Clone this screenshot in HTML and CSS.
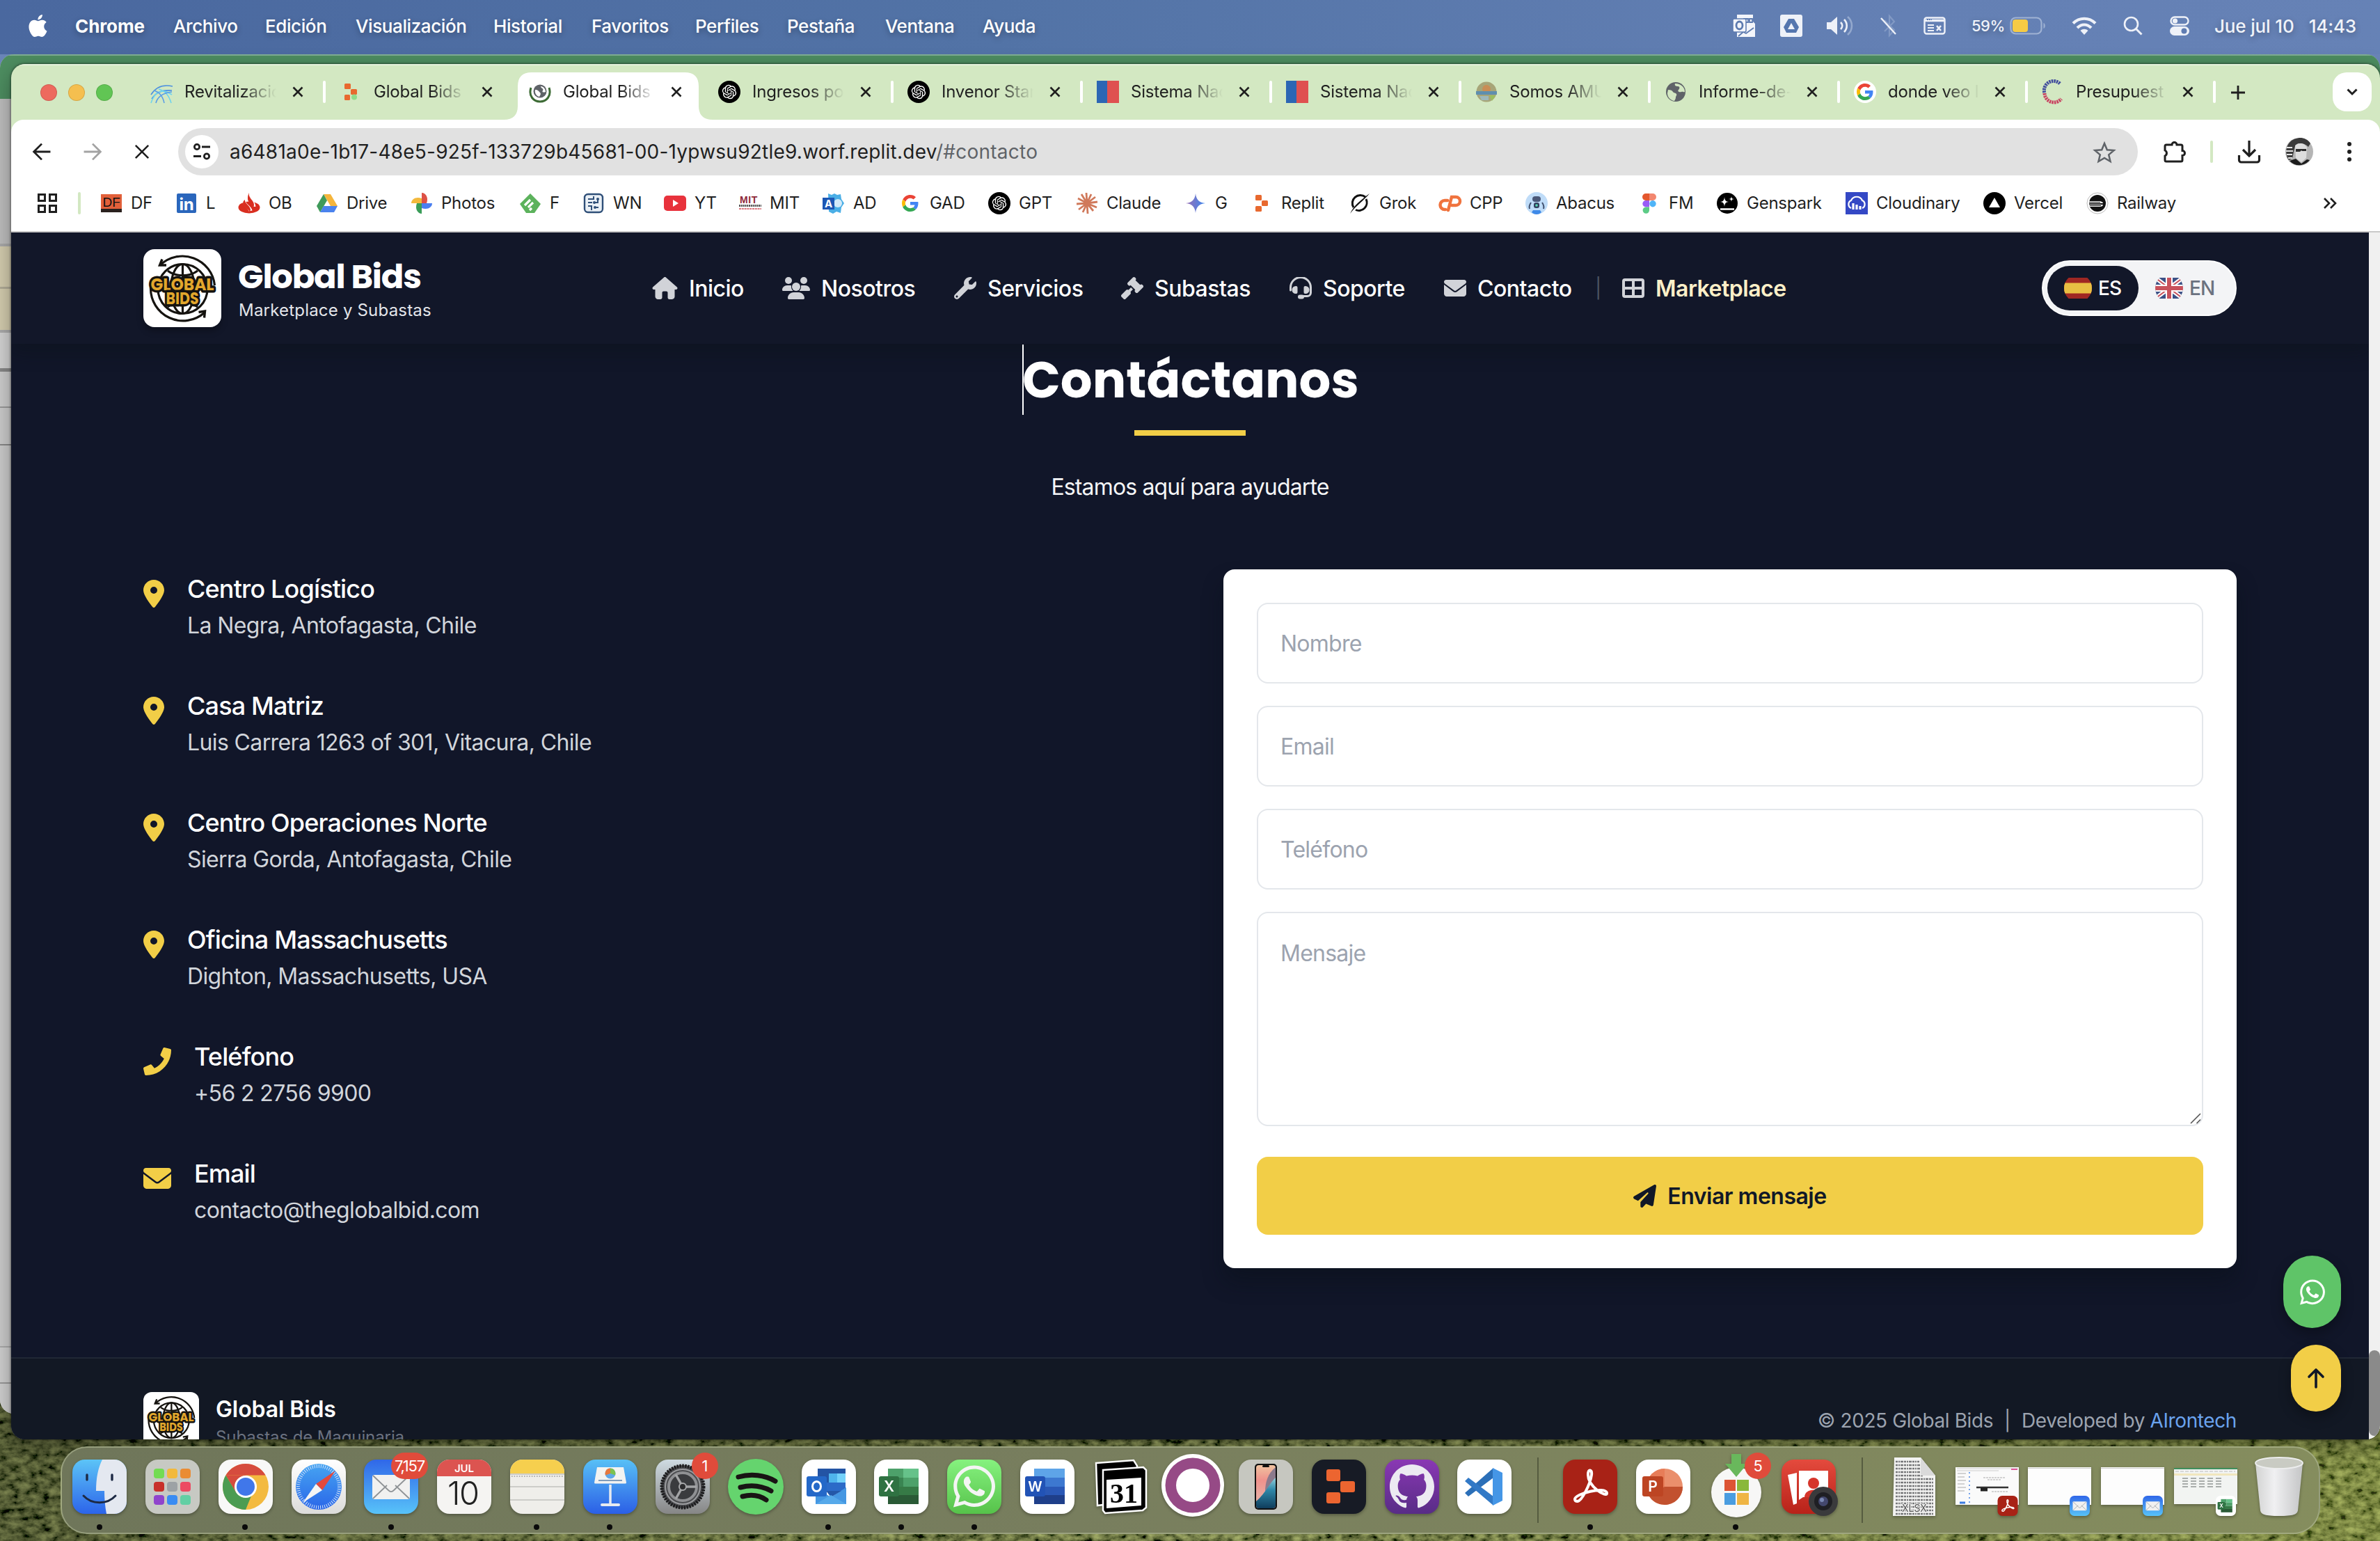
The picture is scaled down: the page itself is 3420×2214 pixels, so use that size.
FILE: index.html
```html
<!DOCTYPE html>
<html lang="es">
<head>
<meta charset="utf-8">
<title>Global Bids - Contacto</title>
<link rel="stylesheet" href="styles.css">
</head>
<body>
<svg class="defs" width="0" height="0">
  <defs>
    <linearGradient id="g-finder" x1="0" y1="0" x2="0" y2="1"><stop offset="0" stop-color="#5cc4f7"/><stop offset="1" stop-color="#2c64ea"/></linearGradient>
    <linearGradient id="g-light" x1="0" y1="0" x2="0" y2="1"><stop offset="0" stop-color="#ffffff"/><stop offset="1" stop-color="#dcdcda"/></linearGradient>
    <linearGradient id="g-mail" x1="0" y1="0" x2="0" y2="1"><stop offset="0" stop-color="#3067e8"/><stop offset="1" stop-color="#58c3f9"/></linearGradient>
    <linearGradient id="g-key" x1="0" y1="0" x2="0" y2="1"><stop offset="0" stop-color="#58c0f6"/><stop offset="1" stop-color="#2b5fe6"/></linearGradient>
    <linearGradient id="g-wa" x1="0" y1="0" x2="0" y2="1"><stop offset="0" stop-color="#86f27f"/><stop offset="1" stop-color="#56c24a"/></linearGradient>
    <linearGradient id="g-gh" x1="0" y1="0" x2="0" y2="1"><stop offset="0" stop-color="#8a38b4"/><stop offset="1" stop-color="#582c86"/></linearGradient>
    <linearGradient id="g-set" x1="0" y1="0" x2="0" y2="1"><stop offset="0" stop-color="#cfdbe2"/><stop offset="1" stop-color="#868686"/></linearGradient>
    <linearGradient id="g-saf" x1="0" y1="0" x2="0" y2="1"><stop offset="0" stop-color="#46a4f2"/><stop offset="1" stop-color="#2a66e8"/></linearGradient>
    <linearGradient id="g-phone" x1="0" y1="0" x2="0" y2="1"><stop offset="0" stop-color="#f0c3a0"/><stop offset=".35" stop-color="#ef928c"/><stop offset=".7" stop-color="#e9a9a0"/><stop offset="1" stop-color="#e9a9a0"/></linearGradient>
    <linearGradient id="g-phone2" x1="0" y1="0" x2="0" y2="1"><stop offset="0" stop-color="#8fd0dc"/><stop offset=".4" stop-color="#2f87a8"/><stop offset="1" stop-color="#0f3d5c"/></linearGradient>
    <linearGradient id="g-trash" x1="0" y1="0" x2="1" y2="0"><stop offset="0" stop-color="#d2d3d2"/><stop offset=".4" stop-color="#f0f0f2"/><stop offset="1" stop-color="#c4c5c6"/></linearGradient>
    <linearGradient id="g-red" x1="0" y1="0" x2="0" y2="1"><stop offset="0" stop-color="#e44a3d"/><stop offset="1" stop-color="#b82219"/></linearGradient>
    <linearGradient id="g-gem" x1="0" y1="0" x2="1" y2="0"><stop offset="0" stop-color="#9a6fb4"/><stop offset="1" stop-color="#3b86ee"/></linearGradient>
    <linearGradient id="g-sun" x1="0" y1="0" x2="1" y2="0"><stop offset="0" stop-color="#0c1006" stop-opacity=".35"/><stop offset=".5" stop-color="#30380e" stop-opacity=".1"/><stop offset="1" stop-color="#8a9a30" stop-opacity=".3"/></linearGradient>

    <symbol id="i-x" viewBox="0 0 16 16"><path d="M1.500 1.500l13 13M14.500 1.500l-13 13" stroke="currentColor" stroke-width="2.600" fill="none"/></symbol>
    <symbol id="i-mail" viewBox="0 0 512 512"><path fill="currentColor" d="M48 64C21.500 64 0 85.500 0 112c0 15.100 7.100 29.300 19.200 38.400L236.800 313.600c11.400 8.500 27 8.500 38.400 0L492.800 150.400c12.100-9.100 19.200-23.300 19.200-38.400c0-26.500-21.500-48-48-48H48zM0 176V384c0 35.300 28.700 64 64 64H448c35.300 0 64-28.700 64-64V176L294.400 339.200c-22.800 17.100-54 17.100-76.800 0L0 176z"/></symbol>
    <symbol id="i-pin" viewBox="0 0 384 512"><path fill="currentColor" d="M215.700 499.200C267 435 384 279.400 384 192C384 86 298 0 192 0S0 86 0 192c0 87.400 117 243 168.300 307.200c12.300 15.300 35.100 15.300 47.400 0zM192 128a64 64 0 1 1 0 128 64 64 0 1 1 0-128z"/></symbol>
    <symbol id="i-phone" viewBox="0 0 512 512"><path fill="currentColor" d="M493.400 24.600l-104-24c-11.300-2.600-22.900 3.300-27.500 13.900l-48 112c-4.200 9.800-1.400 21.300 6.900 28l60.600 49.600c-36 76.700-98.900 140.500-177.200 177.200l-49.600-60.600c-6.800-8.300-18.200-11.100-28-6.900l-112 48C3.900 366.500-2 378.100.6 389.400l24 104C27.100 504.200 36.700 512 48 512c256.100 0 464-207.500 464-464 0-11.200-7.700-20.900-18.600-23.400z"/></symbol>
    <symbol id="i-plane" viewBox="0 0 512 512"><path fill="currentColor" d="M498.100 5.600c10.100 7 15.400 19.100 13.500 31.200l-64 416c-1.500 9.700-7.400 18.200-16 23s-18.900 5.400-28 1.600L284 427.700l-68.500 74.100c-8.900 9.700-22.900 12.900-35.200 8.100S160 493.200 160 480V396.400c0-4 1.500-7.800 4.200-10.700L331.800 202.800c5.800-6.300 5.600-16-.4-22s-15.700-6.400-22-.7L106 360.800 17.700 316.600C7.100 311.300 .3 300.700 0 288.900s5.900-22.800 16.100-28.700l448-256c10.700-6.100 23.900-5.500 34 1.400z"/></symbol>
    <symbol id="i-wa" viewBox="0 0 448 512"><path fill="currentColor" d="M380.900 97.100C339 55.100 283.200 32 223.900 32c-122.400 0-222 99.600-222 222 0 39.100 10.200 77.300 29.600 111L0 480l117.700-30.900c32.400 17.700 68.900 27 106.100 27h.1c122.300 0 224.100-99.600 224.100-222 0-59.300-25.200-115-67.100-157zm-157 341.600c-33.200 0-65.700-8.900-94-25.700l-6.700-4-69.800 18.300L72 359.200l-4.400-7c-18.500-29.400-28.200-63.300-28.200-98.200 0-101.700 82.800-184.500 184.600-184.500 49.300 0 95.600 19.200 130.400 54.100 34.800 34.900 56.200 81.200 56.100 130.500 0 101.800-84.900 184.600-186.600 184.600zm101.200-138.200c-5.500-2.800-32.800-16.200-37.900-18-5.100-1.900-8.800-2.800-12.500 2.800-3.700 5.600-14.300 18-17.600 21.800-3.200 3.700-6.500 4.200-12 1.400-32.600-16.300-54-29.100-75.500-66-5.700-9.800 5.700-9.100 16.300-30.300 1.800-3.700.9-6.900-.5-9.700-1.400-2.800-12.500-30.100-17.100-41.200-4.500-10.800-9.100-9.300-12.500-9.500-3.200-.2-6.900-.2-10.600-.2-3.700 0-9.700 1.400-14.800 6.900-5.100 5.600-19.400 19-19.400 46.300 0 27.300 19.900 53.700 22.600 57.400 2.800 3.700 39.100 59.700 94.800 83.800 35.200 15.200 49 16.500 66.600 13.900 10.700-1.600 32.800-13.400 37.400-26.400 4.600-13 4.600-24.100 3.200-26.400-1.300-2.500-5-3.900-10.500-6.600z"/></symbol>
    <symbol id="i-wrench" viewBox="0 0 512 512"><path fill="currentColor" d="M507.730 109.100c-2.240-9.030-13.540-12.090-20.120-5.510l-74.360 74.360-67.880-11.310-11.310-67.880 74.360-74.360c6.620-6.620 3.430-17.900-5.660-20.160-47.380-11.740-99.550.91-136.580 37.930-39.640 39.640-50.550 97.100-34.050 147.200L18.740 402.760c-24.990 24.990-24.990 65.510 0 90.500 24.990 24.990 65.510 24.990 90.500 0l213.210-213.210c50.120 16.710 107.470 5.680 147.370-34.220 37.070-37.070 49.700-89.320 37.910-136.730zM64 472c-13.250 0-24-10.750-24-24 0-13.260 10.750-24 24-24s24 10.740 24 24c0 13.250-10.750 24-24 24z"/></symbol>
    <symbol id="i-home" viewBox="0 0 576 512"><path fill="currentColor" d="M575.800 255.500c0 18-15 32.100-32 32.100h-32l.7 160.200c.2 35.500-28.500 64.300-64 64.300H392c-22 0-40-18-40-40V360c0-17.700-14.300-32-32-32h-64c-17.700 0-32 14.300-32 32v112c0 22-18 40-40 40h-56c-35.300 0-64-28.700-64-64V287.600H32c-18 0-32-14-32-32.100 0-9 3-17 10-24L266.400 8c7-7 15-8 22-8s15 2 21 7L564.800 231.500c8 7 12 15 11 24z"/></symbol>
    <symbol id="i-users" viewBox="0 0 40 32"><g fill="currentColor"><circle cx="9" cy="5" r="5"/><circle cx="31" cy="5" r="5"/><circle cx="20" cy="14" r="6"/><path d="M0 18.500C0 15 3 12 7 12h4.500c1 0 1.500.3 1.500.3-.4 3 .5 5.600 2.500 7.700H1.300C.6 20 0 19.300 0 18.500zM40 18.500c0-3.500-3-6.500-7-6.500h-4.500c-1 0-1.500.3-1.500.3.4 3-.5 5.600-2.500 7.700h14.200c.7 0 1.300-.7 1.300-1.500zM8 30.300C8 25.700 11.700 22 16.300 22h7.400c4.600 0 8.300 3.700 8.300 8.300 0 .9-.7 1.700-1.700 1.700H9.700C8.700 32 8 31.200 8 30.300z"/></g></symbol>
    <symbol id="i-gavel" viewBox="0 0 512 512"><path fill="currentColor" d="M318.600 9.400c-12.500-12.500-32.800-12.500-45.300 0l-120 120c-12.500 12.500-12.500 32.800 0 45.300l16 16c12.500 12.500 32.800 12.500 45.300 0l4-4L325.400 293.400l-4 4c-12.500 12.500-12.500 32.800 0 45.300l16 16c12.500 12.500 32.800 12.500 45.300 0l120-120c12.500-12.500 12.500-32.800 0-45.300l-16-16c-12.500-12.500-32.800-12.500-45.300 0l-4 4L330.600 74.600l4-4c12.500-12.500 12.500-32.800 0-45.300l-16-16zm-152 288c-12.500-12.500-32.800-12.500-45.300 0l-112 112c-12.500 12.500-12.500 32.800 0 45.300l48 48c12.500 12.500 32.800 12.500 45.300 0l112-112c12.500-12.500 12.500-32.800 0-45.300l-1.400-1.400L272 285.300 226.700 240 168 298.700l-1.400-1.400z"/></symbol>
    <symbol id="i-headset" viewBox="0 0 32 32"><path d="M1.500 19v-4a14.500 14.500 0 0 1 29 0v7.500c0 3-2.400 5-5 5H18" fill="none" stroke="currentColor" stroke-width="3" stroke-linecap="round"/><g fill="currentColor"><path d="M9 13h.500a2 2 0 0 1 2 2v7a2 2 0 0 1-2 2H9a5.500 5.500 0 0 1 0-11zM23 13h-.500a2 2 0 0 0-2 2v7a2 2 0 0 0 2 2h.500a5.500 5.500 0 0 0 0-11z"/><rect x="12" y="25.500" width="9" height="6" rx="3"/></g></symbol>
    <symbol id="i-table" viewBox="0 0 32 32"><path fill="currentColor" fill-rule="evenodd" d="M4 2h24a4 4 0 0 1 4 4v20a4 4 0 0 1-4 4H4a4 4 0 0 1-4-4V6a4 4 0 0 1 4-4zm0 4v8h10V6zm14 0v8h10V6zM4 18v8h10v-8zm14 0v8h10v-8z"/></symbol>
    <symbol id="i-openai" viewBox="0 0 32 32"><circle cx="16" cy="16" r="16" fill="#000"/><path transform="translate(5.800 5.800) scale(.85)" fill="#fff" d="M22.2819 9.8211a5.9847 5.9847 0 0 0-.5157-4.9108 6.0462 6.0462 0 0 0-6.5098-2.9A6.0651 6.0651 0 0 0 4.9807 4.1818a5.9847 5.9847 0 0 0-3.9977 2.9 6.0462 6.0462 0 0 0 .7427 7.0966 5.98 5.98 0 0 0 .511 4.9107 6.051 6.051 0 0 0 6.5146 2.9001A5.9847 5.9847 0 0 0 13.2599 24a6.0557 6.0557 0 0 0 5.7718-4.2058 5.9894 5.9894 0 0 0 3.9977-2.9001 6.0557 6.0557 0 0 0-.7475-7.0729zm-9.022 12.6081a4.4755 4.4755 0 0 1-2.8764-1.0408l.1419-.0804 4.7783-2.7582a.7948.7948 0 0 0 .3927-.6813v-6.7369l2.02 1.1686a.071.071 0 0 1 .038.052v5.5826a4.504 4.504 0 0 1-4.4945 4.4944zm-9.6607-4.1254a4.4708 4.4708 0 0 1-.5346-3.0137l.142.0852 4.783 2.7582a.7712.7712 0 0 0 .7806 0l5.8428-3.3685v2.3324a.0804.0804 0 0 1-.0332.0615L9.74 19.9502a4.4992 4.4992 0 0 1-6.1408-1.6464zM2.3408 7.8956a4.485 4.485 0 0 1 2.3655-1.9728V11.6a.7664.7664 0 0 0 .3879.6765l5.8144 3.3543-2.0201 1.1685a.0757.0757 0 0 1-.071 0l-4.8303-2.7865A4.504 4.504 0 0 1 2.3408 7.872zm16.5963 3.8558L13.1038 8.364 15.1192 7.2a.0757.0757 0 0 1 .071 0l4.8303 2.7913a4.4944 4.4944 0 0 1-.6765 8.1042v-5.6772a.79.79 0 0 0-.407-.667zm2.0107-3.0231l-.142-.0852-4.7735-2.7818a.7759.7759 0 0 0-.7854 0L9.409 9.2297V6.8974a.0662.0662 0 0 1 .0284-.0615l4.8303-2.7866a4.4992 4.4992 0 0 1 6.6802 4.66zM8.3065 12.863l-2.02-1.1638a.0804.0804 0 0 1-.038-.0567V6.0742a4.4992 4.4992 0 0 1 7.3757-3.4537l-.142.0805L8.704 5.459a.7948.7948 0 0 0-.3927.6813zm1.0976-2.3654l2.602-1.4998 2.6069 1.4998v2.9994l-2.5974 1.4997-2.6067-1.4997Z"/></symbol>
    <symbol id="i-flagcl" viewBox="0 0 32 32"><rect width="15" height="32" fill="#2c66b4"/><rect x="15" width="17" height="32" fill="#df5150"/></symbol>
    <symbol id="i-globe" viewBox="0 0 32 32"><circle cx="16" cy="16" r="14" fill="#5f6368"/><path d="M5 13c4 0 6 1 7 3s4 1 5 3-1 3-1 5-1 3-2 5C8 28 4 23 4 18zM15 4c-1 3 1 4 4 4s3 3 1 5 1 4 4 3 3 1 5 0c0-6-5-12-14-12z" fill="#d3e8c2"/></symbol>
    <symbol id="i-google" viewBox="0 0 48 48"><path fill="#EA4335" d="M24 9.500c3.540 0 6.710 1.220 9.210 3.600l6.850-6.850C35.900 2.380 30.470 0 24 0 14.620 0 6.510 5.380 2.560 13.220l7.980 6.190C12.430 13.720 17.740 9.500 24 9.500z"/><path fill="#4285F4" d="M46.980 24.550c0-1.570-.15-3.090-.38-4.550H24v9.020h12.940c-.58 2.960-2.260 5.480-4.780 7.180l7.730 6c4.510-4.180 7.090-10.360 7.090-17.650z"/><path fill="#FBBC05" d="M10.530 28.590c-.48-1.450-.76-2.990-.76-4.590s.27-3.140.76-4.590l-7.980-6.190C.92 16.460 0 20.120 0 24c0 3.880.92 7.540 2.560 10.780l7.970-6.190z"/><path fill="#34A853" d="M24 48c6.480 0 11.930-2.130 15.890-5.810l-7.730-6c-2.150 1.450-4.920 2.300-8.160 2.300-6.260 0-11.570-4.220-13.470-9.910l-7.980 6.190C6.510 42.620 14.620 48 24 48z"/></symbol>
    <symbol id="i-replit" viewBox="0 0 32 32"><g fill="#e8692f"><rect x="7" y="4" width="9" height="8" rx="1.500"/><rect x="16" y="12" width="9" height="8" rx="1.500"/><rect x="7" y="20" width="9" height="8" rx="1.500"/></g></symbol>
    <symbol id="i-logo" viewBox="0 0 112 112">
      <g fill="none" stroke="#15130f" stroke-width="3.200">
        <circle cx="56.500" cy="57" r="35.500"/><ellipse cx="56.500" cy="57" rx="17" ry="35.500"/><path d="M56.500 21v72M35 31c12 9 31 9 43 0M35 83c12-9 31-9 43 0"/>
        <path d="M24 23A46.500 46.500 0 0 1 102.500 52M88 91A46.500 46.500 0 0 1 10.500 55"/><path d="M27 14.500l-3.500 8.500 9.500 0M79.500 90.500l9-1.500-1 9.500" stroke-width="3.400"/>
      </g>
      <g font-family="Poppins, Inter, sans-serif" font-weight="700" fill="#e2a72c" stroke="#15130f" stroke-width="7" stroke-linejoin="round" paint-order="stroke" text-anchor="middle">
        <text x="56" y="58.500" font-size="25" textLength="91" lengthAdjust="spacingAndGlyphs">GLOBAL</text>
        <text x="56" y="79" font-size="25" textLength="47" lengthAdjust="spacingAndGlyphs">BIDS</text>
      </g>
    </symbol>
    <symbol id="i-mailapp" viewBox="0 0 78 78"><rect width="78" height="78" rx="18" fill="url(#g-mail)"/><rect x="12" y="22" width="54" height="35" rx="3" fill="#f1f1f0"/><path d="M13 56l20-19M65 56L45 37M13 23l22 21c3 3 5 3 8 0l22-21" fill="none" stroke="#8f9396" stroke-width="1.800"/></symbol>
    <symbol id="i-acro" viewBox="0 0 78 78"><rect width="78" height="78" rx="18" fill="#a82216"/><path d="M17 57c0-8 44-19 46-9 1 8-28-9-27-27 0-8 6-7 5 1-2 14-14 37-20 38-3 0-4-1-4-3z" fill="none" stroke="#fff" stroke-width="4"/></symbol>
    <symbol id="i-excel" viewBox="0 0 78 78"><rect width="78" height="78" rx="18" fill="#fff"/><rect x="20" y="13" width="22" height="13" fill="#4da16a"/><rect x="42" y="13" width="22" height="13" fill="#66c28a"/><rect x="20" y="26" width="22" height="13" fill="#3a8552"/><rect x="42" y="26" width="22" height="13" fill="#4da16a"/><rect x="20" y="39" width="44" height="12" fill="#367a46"/><rect x="20" y="51" width="44" height="13" fill="#2a5a36"/><rect x="7" y="24" width="29" height="29" rx="3" fill="#2f7242"/><text x="21.500" y="46" font-family="Inter" font-size="21" font-weight="600" fill="#fff" text-anchor="middle">X</text></symbol>
    <filter id="grass" x="0" y="0" width="100%" height="100%"><feTurbulence type="fractalNoise" baseFrequency=".07 .11" numOctaves="4" seed="8"/><feColorMatrix values=".75 0 0 0 -.19  .82 0 0 0 -.19  .3 0 0 0 -.08  0 0 0 0 1"/></filter>
  </defs>
</svg>

<div class="desktop">
  <svg class="grass" width="3420" height="220"><rect width="3420" height="220" filter="url(#grass)"/><rect width="3420" height="220" fill="url(#g-sun)"/></svg>

  <header class="menubar">
    <nav class="menus">
      <svg width="27" height="32" viewBox="2 0 20 24" fill="#fff"><path d="M12.152 6.896c-.948 0-2.415-1.078-3.960-1.040-2.040.027-3.910 1.183-4.961 3.014-2.117 3.675-.546 9.103 1.519 12.090 1.013 1.454 2.208 3.090 3.792 3.039 1.520-.065 2.090-.987 3.935-.987 1.831 0 2.350.987 3.960.948 1.637-.026 2.676-1.480 3.676-2.948 1.156-1.688 1.636-3.325 1.662-3.415-.039-.013-3.182-1.221-3.220-4.857-.026-3.040 2.480-4.494 2.597-4.559-1.429-2.090-3.623-2.324-4.390-2.376-2-.156-3.675 1.090-4.610 1.090zM15.530 3.830c.843-1.012 1.400-2.427 1.245-3.830-1.207.052-2.662.805-3.532 1.818-.780.896-1.454 2.338-1.273 3.714 1.338.104 2.715-.688 3.559-1.701"/></svg>
      <b>Chrome</b><span>Archivo</span><span>Edición</span><span>Visualización</span><span>Historial</span><span>Favoritos</span><span>Perfiles</span><span>Pestaña</span><span>Ventana</span><span>Ayuda</span>
    </nav>
    <div class="status">
      <svg width="34" height="34" viewBox="0 0 34 34"><path d="M7 1h23v10l3 3v19H7z" fill="#f3f5fa"/><path d="M17 7h6v5h-6zM25 7h4v5h-4zM9 22l11 6 11-8M9 32l8-7" stroke="#5d7bb0" stroke-width="1.800" fill="none"/><rect x="1" y="7" width="19" height="19" rx="2" fill="#f3f5fa" stroke="#5d7bb0" stroke-width="1.500"/><ellipse cx="10.500" cy="16.500" rx="4.500" ry="5.500" fill="none" stroke="#5d7bb0" stroke-width="2.800"/></svg>
      <svg width="32" height="32" viewBox="0 0 32 32"><rect width="32" height="32" rx="3" fill="#eef1f8"/><path d="M12 6h8l7 12-4 8H9l-4-8z" fill="#5576ae"/><path d="M16 12l5 9H11z" fill="#eef1f8"/></svg>
      <svg width="40" height="32" viewBox="0 0 40 32"><path d="M1 11h6l9-8v26l-9-8H1z" fill="#eef1f8"/><path d="M21 11c3 3 3 7 0 10M26 7c5 5 5 13 0 18" stroke="#eef1f8" stroke-width="2.600" fill="none"/><path d="M31 3c8 7 8 19 0 26" stroke="#93a8cd" stroke-width="2.600" fill="none"/></svg>
      <svg width="28" height="32" viewBox="0 0 28 32"><path d="M8 8l14 14-7 8V2l7 8L8 24" stroke="#8299c4" stroke-width="2.200" fill="none"/><path d="M3 5l21 23" stroke="#eef1f8" stroke-width="2.400"/></svg>
      <svg width="32" height="26" viewBox="0 0 32 26"><rect x="1.500" y="1.500" width="29" height="23" rx="3" fill="none" stroke="#eef1f8" stroke-width="2.400"/><path d="M2 5.500h28" stroke="#eef1f8" stroke-width="3.500"/><path d="M5 4h7" stroke="#5d7bb0" stroke-width="2" stroke-dasharray="2 1"/><path d="M6 12h9M6 16h9M6 20h9" stroke="#eef1f8" stroke-width="2"/><path d="M19 13l6 7M25 13l-6 7" stroke="#eef1f8" stroke-width="2.600"/></svg>
      <span class="battery-text">59%</span>
      <svg width="54" height="26" viewBox="0 0 54 26"><rect x="1.500" y="1.500" width="44" height="23" rx="7" fill="none" stroke="#9fb2d3" stroke-width="2.200"/><rect x="4" y="4" width="22" height="18" rx="4" fill="#f6cb45"/><path d="M48.500 9c3 1 3 7 0 8z" fill="#9fb2d3"/></svg>
      <svg width="36" height="28" viewBox="0 0 36 28"><g fill="none" stroke="#eef1f8" stroke-width="4.200"><path d="M2 10.500c9-9 23-9 32 0"/><path d="M8 17c6-6 14-6 20 0"/></g><path d="M18 27l-5.500-6c3-3 8-3 11 0z" fill="#eef1f8"/></svg>
      <svg width="28" height="28" viewBox="0 0 28 28"><circle cx="11.500" cy="11.500" r="9.500" fill="none" stroke="#eef1f8" stroke-width="2.600"/><path d="M18.500 18.500l8 8" stroke="#eef1f8" stroke-width="3"/></svg>
      <svg width="28" height="28" viewBox="0 0 28 28"><rect x="1.500" y="1.500" width="25" height="11" rx="5.500" fill="none" stroke="#eef1f8" stroke-width="2.400"/><circle cx="7.500" cy="7" r="3.600" fill="#eef1f8"/><rect y="15" width="28" height="13" rx="6.500" fill="#eef1f8"/><circle cx="20.500" cy="21.500" r="4" fill="#5f7cb2"/></svg>
      <span class="clock"><span>Jue jul 10</span><span>14:43</span></span>
    </div>
  </header>

  <div class="backwin"><div class="backwin-top"></div><div class="backwin-sheet"></div></div>

  <main class="chrome">
    <div class="tabstrip">
      <div class="lights"><i></i><i></i><i></i></div>
      <div class="tabs">
        <div class="tab"><svg viewBox="0 0 32 32"><g fill="none" stroke-width="1.600"><path d="M1 20C8 9 18 5 32 8M2 26c6-9 14-13 29-12" stroke="#4b8fe0"/><path d="M1 32C6 16 16 10 31 20M12 12c9 2 15 10 18 20" stroke="#6fd3ee"/><path d="M8 32c2-8 8-14 23-16M5 14c8 2 13 9 15 18" stroke="#5a9de6"/></g></svg><span>Revitalizació</span><svg class="close"><use href="#i-x"/></svg></div>
        <div class="tab nosep"><svg viewBox="0 0 32 32"><rect x="7" y="4" width="9" height="8" rx="1.500" fill="#e8692f"/><rect x="16" y="12" width="9" height="8" rx="1.500" fill="#e8692f"/><rect x="7" y="20" width="8" height="8" rx="1.500" fill="#e8692f"/><circle cx="21" cy="23.500" r="4" fill="#8fdc8c"/></svg><span>Global Bids</span><svg class="close"><use href="#i-x"/></svg></div>
        <div class="tab active nosep"><svg viewBox="0 0 32 32"><circle cx="16" cy="15" r="9.500" fill="#5f6368"/><path d="M9 13c4 0 5 2 7 4s0 4-1 6c-4-1-7-5-6-10zM17 8c0 3 5 3 3 6s2 3 4 2c0-4-3-8-7-8z" fill="#fff"/><path d="M3 10C-1 22 7 30 16 30s17-8 13-20" fill="none" stroke="#3d6b35" stroke-width="3"/></svg><span>Global Bids</span><svg class="close"><use href="#i-x"/></svg><svg class="tabshape" width="300" height="68" viewBox="0 0 300 68"><path d="M0 68Q20 68 20 48V20Q20 0 40 0H260Q280 0 280 20V48Q280 68 300 68Z" fill="#fff"/></svg></div>
        <div class="tab"><svg><use href="#i-openai"/></svg><span>Ingresos por</span><svg class="close"><use href="#i-x"/></svg></div>
        <div class="tab"><svg><use href="#i-openai"/></svg><span>Invenor Star</span><svg class="close"><use href="#i-x"/></svg></div>
        <div class="tab"><svg><use href="#i-flagcl"/></svg><span>Sistema Nac</span><svg class="close"><use href="#i-x"/></svg></div>
        <div class="tab"><svg><use href="#i-flagcl"/></svg><span>Sistema Nac</span><svg class="close"><use href="#i-x"/></svg></div>
        <div class="tab"><svg viewBox="0 0 32 32"><circle cx="16" cy="16" r="14.500" fill="#a7a578"/><circle cx="16" cy="12" r="6" fill="#c98d55"/><path d="M1 15h30v5H1z" fill="#5f8fae"/><path d="M6 22h13v6H9z" fill="#9db8bb"/><path d="M20 21h9l-5 8z" fill="#9abf5e"/></svg><span>Somos AMU</span><svg class="close"><use href="#i-x"/></svg></div>
        <div class="tab"><svg><use href="#i-globe"/></svg><span>Informe-de-</span><svg class="close"><use href="#i-x"/></svg></div>
        <div class="tab short"><svg viewBox="0 0 32 32"><circle cx="16" cy="16" r="16" fill="#fff"/><use href="#i-google" x="4" y="4" width="24" height="24"/></svg><span>donde veo l</span><svg class="close"><use href="#i-x"/></svg></div>
        <div class="tab short"><svg viewBox="0 0 32 32"><path d="M26 4A13.500 13.500 0 0 0 4 18" fill="none" stroke="#3f4a9c" stroke-width="5" stroke-dasharray="2.500 1"/><path d="M4 18a13.500 13.500 0 0 0 24 8" fill="none" stroke="#c94160" stroke-width="5" stroke-dasharray="2.500 1"/></svg><span>Presupuest</span><svg class="close"><use href="#i-x"/></svg></div>
      </div>
      <svg class="newtab" width="20" height="20" viewBox="0 0 20 20"><path d="M10 0v20M0 10h20" stroke="#1f1f1f" stroke-width="2.800"/></svg>
      <div class="tabsearch"><svg width="16" height="10" viewBox="0 0 16 10"><path d="M1.500 1.500L8 8l6.500-6.500" fill="none" stroke="#1f1f1f" stroke-width="3"/></svg></div>
    </div>

    <div class="toolbar">
      <div class="navbtns">
        <svg viewBox="0 0 24 24" width="26" height="26"><path d="M23.500 12H2M12 1.500L1.500 12 12 22.500" fill="none" stroke="#1f1f1f" stroke-width="2.600"/></svg>
        <svg viewBox="0 0 24 24" width="26" height="26"><path d="M.5 12H22M12 1.500L22.500 12 12 22.500" fill="none" stroke="#a3a3a3" stroke-width="2.600"/></svg>
        <svg viewBox="0 0 24 24" width="22" height="22"><path d="M2 2l20 20M22 2L2 22" fill="none" stroke="#1f1f1f" stroke-width="2.800"/></svg>
      </div>
      <div class="omnibox">
        <div class="siteinfo"><svg width="26" height="26" viewBox="0 0 26 26" fill="none" stroke="#1f1f1f" stroke-width="2.800"><circle cx="6" cy="6" r="3.600"/><path d="M13 6h12M1 19.500h11"/><circle cx="20" cy="19.500" r="3.600"/></svg></div>
        <span class="url">a6481a0e-1b17-48e5-925f-133729b45681-00-1ypwsu92tle9.worf.replit.dev<em>/#contacto</em></span>
        <svg class="star" width="32" height="31" viewBox="0 0 32 31"><path d="M16 3l3.800 9.200 9.900.8-7.500 6.400 2.300 9.600L16 23.900 7.500 29l2.300-9.600L2.300 13l9.900-.8z" fill="none" stroke="#5f6368" stroke-width="2.500"/></svg>
      </div>
      <div class="actions">
        <svg width="34" height="34" viewBox="0 0 34 34"><path d="M5 7h8a3.500 3.500 0 0 1 7 0h6a2 2 0 0 1 2 2v6.500a3.500 3.500 0 0 1 0 7V29a2 2 0 0 1-2 2H5a2 2 0 0 1-2-2v-6a4.500 4.500 0 0 0 0-8V9a2 2 0 0 1 2-2z" fill="none" stroke="#1f1f1f" stroke-width="3"/></svg>
        <i class="vsep"></i>
        <svg width="32" height="34" viewBox="0 0 32 34"><path d="M16 1v20M7 14l9 9 9-9M1.500 22v7a3 3 0 0 0 3 3h23a3 3 0 0 0 3-3v-7" fill="none" stroke="#1f1f1f" stroke-width="3.200"/></svg>
        <svg width="40" height="40" viewBox="0 0 40 40"><circle cx="20" cy="20" r="20" fill="#b5b5b5"/><path d="M5 8C12-2 29-3 36 8l-3 5C27 7 18 6 14 12l-2 8-2 10-5 2C0 25 0 15 5 8z" fill="#3a3a3a"/><path d="M14 11c5-5 14-4 17 3l-1 15-7 6-8-6z" fill="#dedede"/><path d="M15 16h15v3h-6l-1-1-2 2h-6z" fill="#2b2b2b"/><path d="M6 33l9-3 8 7 8-6 4 1c-8 9-21 10-29 1z" fill="#1c1c1c"/><path d="M2 14h8M1 19h10M2 24h8M4 29h6" stroke="#e4e4e4" stroke-width="1.800"/></svg>
        <svg width="8" height="30" viewBox="0 0 8 30" fill="#1f1f1f"><circle cx="4" cy="4" r="3"/><circle cx="4" cy="15" r="3"/><circle cx="4" cy="26" r="3"/></svg>
      </div>
    </div>

    <div class="bookmarks">
      <svg class="apps" width="28" height="28" viewBox="0 0 28 28" fill="none" stroke="#1f1f1f" stroke-width="3"><path d="M1.500 1.500h9v9h-9zM17.500 1.500h9v9h-9zM1.500 17.500h9v9h-9zM17.500 17.500h9v9h-9z"/></svg>
      <i class="vsep"></i>
      <div class="bmlist">
        <a><svg viewBox="0 0 32 32"><rect x="1" y="3" width="30" height="26" fill="#e2603a"/><rect x="1" y="24" width="30" height="5" fill="#2a211e"/><text x="16" y="21" font-family="Liberation Sans" font-size="19" textLength="25" text-anchor="middle" fill="#111">DF</text></svg>DF</a>
        <a><svg viewBox="0 0 32 32"><rect x="2" y="2" width="28" height="28" rx="2" fill="#2a66bc"/><text x="16" y="25.500" font-family="Inter" font-weight="700" font-size="24" text-anchor="middle" fill="#fff">in</text></svg>L</a>
        <a><svg viewBox="0 0 32 32"><ellipse cx="16" cy="22" rx="15.500" ry="8.500" fill="#d92e20"/><path d="M9 14c0 5 8 7 9 13M16 1c-3 8 6 11 7 20" fill="none" stroke="#fff" stroke-width="5"/><path d="M16 1c-2 7 7 11 7 17 0 3-1 5-2 6 0-6-8-9-7-16 0-3 1-5 2-7zM10 11c-1 5 7 8 8 14l-1 4c-2-6-9-7-10-12 0-3 1-5 3-6z" fill="#d92e20"/></svg>OB</a>
        <a><svg viewBox="0 0 32 32"><path d="M11 3h10l10 17H21z" fill="#f5b53c"/><path d="M11 3l5 9L6 29 1 20z" fill="#3f9a5a"/><path d="M11 20h20l-5 9H6z" fill="#4a82ee"/></svg>Drive</a>
        <a><svg viewBox="0 0 32 32"><path d="M16 1v15H23c3-8-1-15-7-15z" fill="#dd5146"/><path d="M31 16H16v7c8 3 15-1 15-7z" fill="#4a7ff0"/><path d="M16 31V16H9c-3 8 1 15 7 15z" fill="#3a9d58"/><path d="M1 16h15V9C8 6 1 10 1 16z" fill="#f3b93c"/></svg>Photos</a>
        <a><svg viewBox="0 0 32 32"><path d="M16 2l15 15-9 13H10L1 17z" fill="#5cb25c"/><path d="M8 19l8-8M13 22l7-7M15 26l3-3" stroke="#fff" stroke-width="3.200"/></svg>F</a>
        <a><svg viewBox="0 0 32 32"><rect x="3" y="3" width="26" height="26" rx="5" fill="#eaf0f6" stroke="#2f4f78" stroke-width="2.400"/><path d="M8 10h8v-4M8 15h6M8 20h5v6M18 15h4v-4M18 22h5" fill="none" stroke="#2f4f78" stroke-width="2"/><circle cx="22" cy="10" r="2" fill="#2f4f78"/><circle cx="17" cy="15" r="2" fill="#2f4f78"/><circle cx="18" cy="22" r="2" fill="#2f4f78"/></svg>WN</a>
        <a><svg viewBox="0 0 32 32"><rect y="5" width="32" height="22" rx="5" fill="#e8323c"/><path d="M13 11l8 5-8 5z" fill="#fff"/></svg>YT</a>
        <a><svg viewBox="0 0 32 32"><text x="1" y="16" font-family="Liberation Sans" font-weight="700" font-size="14" textLength="25" fill="#8e2a38">MIT</text><path d="M0 19.500h32" stroke="#555" stroke-width="3" stroke-dasharray="2 .8"/><path d="M0 24h32" stroke="#d9777f" stroke-width="2" stroke-dasharray="3 .8"/></svg>MIT</a>
        <a><svg viewBox="0 0 32 32"><path d="M8 2l5 2 4-2 4 2 5-1 1 7 4 6-4 6-1 8-6-2-5 3-6-3z" fill="#4aaee6"/><circle cx="22" cy="16" r="6" fill="#d3e9f8"/><rect y="8" width="17" height="17" fill="#1c56b4"/><text x="8.500" y="22" font-family="Inter" font-size="15" font-weight="700" text-anchor="middle" fill="#fff">A</text></svg>AD</a>
        <a><svg viewBox="0 0 32 32"><use href="#i-google" x="4" y="4" width="24" height="24"/></svg>GAD</a>
        <a><svg><use href="#i-openai"/></svg>GPT</a>
        <a><svg viewBox="0 0 32 32"><path d="M16 16L15 1M16 16l6-13M16 16l12-9M16 16l15-2M16 16l14 6M16 16l9 11M16 16l1 15M16 16l-6 13M16 16L4 25M16 16L1 17M16 16L3 9M16 16L8 3" stroke="#d0795b" stroke-width="2.800"/></svg>Claude</a>
        <a><svg viewBox="0 0 32 32"><path d="M16 2c1 9 5 13 14 14-9 1-13 5-14 14-1-9-5-13-14-14 9-1 13-5 14-14z" fill="url(#g-gem)"/></svg>G</a>
        <a><svg><use href="#i-replit"/></svg>Replit</a>
        <a><svg viewBox="0 0 32 32"><path d="M24 7A11.500 11.500 0 0 0 7 22M10 25.500A11.500 11.500 0 0 0 25 10" fill="none" stroke="#111" stroke-width="3"/><path d="M2 31C8 18 17 12 30 2 22 12 11 19 2 31z" fill="#111"/></svg>Grok</a>
        <a><svg viewBox="0 0 32 32"><path d="M12 12H8a6.500 6.500 0 0 0 0 13h1M13 26l5-19h6a6 6 0 0 1 0 12h-6" fill="none" stroke="#f0733e" stroke-width="4.500" stroke-linecap="round"/></svg>CPP</a>
        <a><svg viewBox="0 0 32 32"><circle cx="16" cy="16" r="16" fill="#bfdcf8"/><rect x="10" y="6" width="12" height="8" rx="4" fill="#4a5878"/><rect x="12" y="15" width="8" height="8" rx="3" fill="#33415f"/><circle cx="16" cy="19" r="1.800" fill="#59d8b4"/><path d="M11 26h10l2 3c-4 4-10 4-14 0z" fill="#3f8ae8"/><path d="M8 15c-2 3-3 6-2 9M24 15c2 3 3 6 2 9" stroke="#41506e" stroke-width="2" fill="none"/></svg>Abacus</a>
        <a><svg viewBox="0 0 32 32"><path d="M16 2h-5a5 5 0 0 0 0 10h5z" fill="#e4572e"/><path d="M16 2h5a5 5 0 0 1 0 10h-5z" fill="#f2876f"/><path d="M16 12h-5a4.700 4.700 0 0 0 0 9.400h5z" fill="#9a5cf6"/><circle cx="21" cy="16.700" r="4.700" fill="#4fb4f8"/><path d="M16 21.400h-5a4.700 4.700 0 1 0 5 4.700z" fill="#5ccb86"/></svg>FM</a>
        <a><svg viewBox="0 0 32 32"><circle cx="16" cy="16" r="15" fill="#000"/><path d="M12 7c.5 5 2 6.500 6 7-4 .5-5.500 2-6 7-.5-5-2-6.500-6-7 4-.5 5.500-2 6-7zM22 6c.3 3 1 3.700 4 4-3 .3-3.700 1-4 4-.3-3-1-3.700-4-4 3-.3 3.700-1 4-4z" fill="#fff"/><path d="M6 24.500h20" stroke="#fff" stroke-width="2.500"/></svg>Genspark</a>
        <a><svg viewBox="0 0 32 32"><rect width="32" height="32" fill="#3448c5"/><path d="M8 23a6 6 0 0 1 0-11c3-7 13-7 16 0a6 6 0 0 1 0 11" fill="none" stroke="#fff" stroke-width="2.200"/><path d="M11 16v9M16 18v7M21 20v5" stroke="#fff" stroke-width="3.200"/></svg>Cloudinary</a>
        <a><svg viewBox="0 0 32 32"><circle cx="16" cy="16" r="16" fill="#000"/><path d="M16 8l8 14H8z" fill="#fff"/></svg>Vercel</a>
        <a><svg viewBox="0 0 32 32"><circle cx="16" cy="16" r="15" fill="#fff" stroke="#bbb"/><circle cx="16" cy="16" r="12" fill="#111"/><path d="M4 13h14c4 0 6 2 6 3H4zM4 18h20c0 2-2 3-5 3H5z" fill="#fff"/><path d="M4 14.500h16M5 19.500h16" stroke="#111"/></svg>Railway</a>
      </div>
      <svg class="more" width="20" height="16" viewBox="0 0 20 16"><path d="M2 1l7 7-7 7M11 1l7 7-7 7" fill="none" stroke="#1f1f1f" stroke-width="2.600"/></svg>
    </div>

    <div class="viewport">
      <div class="page">
        <header class="site-header">
          <div class="brand">
            <div class="logo"><svg width="112" height="112"><use href="#i-logo"/></svg></div>
            <div><div class="brand-name">Global Bids</div><div class="brand-sub">Marketplace y Subastas</div></div>
          </div>
          <nav class="site-nav">
            <a><svg width="37" height="32"><use href="#i-home"/></svg>Inicio</a>
            <a><svg width="40" height="32"><use href="#i-users"/></svg>Nosotros</a>
            <a><svg width="32" height="32"><use href="#i-wrench"/></svg>Servicios</a>
            <a><svg width="32" height="32"><use href="#i-gavel"/></svg>Subastas</a>
            <a><svg width="32" height="32"><use href="#i-headset"/></svg>Soporte</a>
            <a><svg width="32" height="32"><use href="#i-mail"/></svg>Contacto</a>
            <span class="bar">|</span>
            <a class="market"><svg width="32" height="32"><use href="#i-table"/></svg>Marketplace</a>
          </nav>
          <div class="lang">
            <div class="lang-on"><svg width="40" height="30" viewBox="0 0 40 30"><clipPath id="c1"><circle cx="20" cy="15" r="20"/></clipPath><g clip-path="url(#c1)"><rect width="40" height="30" fill="#9f2723"/><rect y="7" width="40" height="16" fill="#c87432"/><rect y="8" width="40" height="14" fill="#e8bf43"/></g></svg>ES</div>
            <div class="lang-off"><svg width="40" height="30" viewBox="0 0 40 30"><clipPath id="c2"><path d="M0 0h40v30H0z"/></clipPath><g clip-path="url(#c1)"><g clip-path="url(#c2)"><rect width="40" height="30" fill="#3c5186"/><path d="M0 0l40 30M40 0L0 30" stroke="#fff" stroke-width="6"/><path d="M0 0l40 30M40 0L0 30" stroke="#c8525c" stroke-width="2"/><path d="M20 0v30M0 15h40" stroke="#fff" stroke-width="10"/><path d="M20 0v30M0 15h40" stroke="#c8525c" stroke-width="6"/></g></g></svg>EN</div>
          </div>
        </header>

        <section class="contact">
          <h1>Contáctanos</h1>
          <div class="rule"></div>
          <p class="lead">Estamos aquí para ayudarte</p>
          <div class="cols">
            <ul class="places">
              <li><svg width="30" height="40"><use href="#i-pin"/></svg><div><h3>Centro Logístico</h3><p>La Negra, Antofagasta, Chile</p></div></li>
              <li><svg width="30" height="40"><use href="#i-pin"/></svg><div><h3>Casa Matriz</h3><p>Luis Carrera 1263 of 301, Vitacura, Chile</p></div></li>
              <li><svg width="30" height="40"><use href="#i-pin"/></svg><div><h3>Centro Operaciones Norte</h3><p>Sierra Gorda, Antofagasta, Chile</p></div></li>
              <li><svg width="30" height="40"><use href="#i-pin"/></svg><div><h3>Oficina Massachusetts</h3><p>Dighton, Massachusetts, USA</p></div></li>
              <li><svg width="40" height="40"><use href="#i-phone"/></svg><div><h3>Teléfono</h3><p>+56 2 2756 9900</p></div></li>
              <li><svg width="40" height="40"><use href="#i-mail"/></svg><div><h3>Email</h3><p>contacto@theglobalbid.com</p></div></li>
            </ul>
            <form class="card">
              <input placeholder="Nombre">
              <input placeholder="Email">
              <input placeholder="Teléfono">
              <div class="area"><textarea placeholder="Mensaje"></textarea><svg class="grip" width="16" height="16" viewBox="0 0 16 16"><path d="M1 15L15 1M9.500 15l5.500-5.500" stroke="#555" stroke-width="1.600"/></svg></div>
              <button type="button"><svg width="33" height="33"><use href="#i-plane"/></svg>Enviar mensaje</button>
            </form>
          </div>
        </section>

        <footer class="site-footer">
          <div class="foot-brand">
            <div class="foot-logo"><svg width="80" height="80"><use href="#i-logo"/></svg></div>
            <div><div class="foot-name">Global Bids</div><div class="foot-sub">Subastas de Maquinaria</div></div>
          </div>
          <div class="copy">© 2025 Global Bids<span>|</span>Developed by <a>AIrontech</a></div>
        </footer>

        <div class="fab fab-wa"><svg width="36" height="41"><use href="#i-wa"/></svg></div>
        <div class="fab fab-up"><svg width="24" height="28" viewBox="0 0 24 28"><path d="M12 27V2M2 12L12 2l10 10" fill="none" stroke="#111827" stroke-width="3.600" stroke-linecap="round" stroke-linejoin="round"/></svg></div>
      </div>
      <div class="scroll"><i></i></div>
    </div>
  </main>

  <div class="dock">
    <div class="app on"><svg viewBox="0 0 78 78"><rect width="78" height="78" rx="18" fill="url(#g-finder)"/><path d="M43 0h17a18 18 0 0 1 18 18v42a18 18 0 0 1-18 18H49c-2-10-3-22-3-33H34C34 26 37 12 43 0z" fill="#e4e8f0"/><path d="M21 22v7M57 22v7" stroke="#1d2a44" stroke-width="3.400" stroke-linecap="round"/><path d="M16 52c12 13 34 13 46 0" fill="none" stroke="#1d2a44" stroke-width="3" stroke-linecap="round"/></svg></div>
    <div class="app"><svg viewBox="0 0 78 78"><rect width="78" height="78" rx="18" fill="#c7c9c3"/><g><rect x="12" y="13" width="15" height="14" rx="4" fill="#72dc52"/><rect x="31" y="13" width="15" height="14" rx="4" fill="#f2b93c"/><rect x="50" y="13" width="15" height="14" rx="4" fill="#ea8c34"/><rect x="12" y="32" width="15" height="14" rx="4" fill="#c8302a"/><rect x="31" y="32" width="15" height="14" rx="4" fill="#9da2a5"/><rect x="50" y="32" width="15" height="14" rx="4" fill="#ec4a62"/><rect x="12" y="51" width="15" height="14" rx="4" fill="#9044cc"/><rect x="31" y="51" width="15" height="14" rx="4" fill="#3a8cf2"/><rect x="50" y="51" width="15" height="14" rx="4" fill="#62cfa4"/></g></svg></div>
    <div class="app on"><svg viewBox="0 0 78 78"><rect width="78" height="78" rx="18" fill="#f8f8f7"/><circle cx="39" cy="39" r="33" fill="#f3ba40"/><path d="M10.400 22.500A33 33 0 0 1 67.600 22.500H39z" fill="#d64c3e"/><path d="M10.400 22.500L25 47 39 39V22.500z" fill="#d64c3e"/><path d="M10.400 22.500L25 47l8 4 15-1L39 72A33 33 0 0 1 10.400 22.500z" fill="#4b9c52"/><circle cx="39" cy="39" r="16" fill="#fff"/><circle cx="39" cy="39" r="13" fill="#4077ea"/></svg></div>
    <div class="app"><svg viewBox="0 0 78 78"><rect width="78" height="78" rx="18" fill="url(#g-light)"/><circle cx="39" cy="39" r="33" fill="url(#g-saf)"/><circle cx="39" cy="39" r="29.500" fill="none" stroke="#cfe2fa" stroke-width="5" stroke-dasharray="1 2.080"/><path d="M63 16L44 44l-9-9z" fill="#e3493d"/><path d="M16 62l19-27 9 9z" fill="#f5f5f5"/></svg></div>
    <div class="app on"><svg><use href="#i-mailapp"/></svg><span class="badge wide">7,157</span></div>
    <div class="app"><svg viewBox="0 0 78 78"><rect width="78" height="78" rx="18" fill="#f5f4f2"/><path d="M0 24V18A18 18 0 0 1 18 0h42a18 18 0 0 1 18 18v6z" fill="#dc5450"/><text x="39" y="18" font-family="Inter" font-size="15" font-weight="600" text-anchor="middle" fill="#fff">JUL</text><text x="38" y="65" font-family="Inter" font-size="47" font-weight="300" text-anchor="middle" fill="#222" textLength="46">10</text></svg></div>
    <div class="app on"><svg viewBox="0 0 78 78"><rect width="78" height="78" rx="18" fill="#efeeea"/><path d="M0 20V18A18 18 0 0 1 18 0h42a18 18 0 0 1 18 18v2z" fill="#f6cf4e"/><path d="M0 21h78M0 39h78M0 58h78" stroke="#c2c2be" stroke-width="1.600"/><path d="M2 24h74" stroke="#999" stroke-width="1.600" stroke-dasharray="1.600 2"/></svg></div>
    <div class="app on"><svg viewBox="0 0 78 78"><rect width="78" height="78" rx="18" fill="url(#g-key)"/><path d="M20 11h38l4 22a1.500 1.500 0 0 1-1.500 1.500h-43A1.500 1.500 0 0 1 16 33z" fill="#f3f3f1"/><circle cx="39" cy="20" r="7.500" fill="#5ea8e8"/><path d="M39 20V12.500a7.500 7.500 0 0 1 7 10z" fill="#7bc250"/><path d="M39 20V12.500a7.500 7.500 0 0 0-7 10z" fill="#e8783c"/><path d="M22 30h34" stroke="#5a7fa8" stroke-width="1.500"/><path d="M39 36v29" stroke="#e7eaf0" stroke-width="3.500"/><path d="M27 65h24" stroke="#e7eaf0" stroke-width="4" stroke-linecap="round"/></svg></div>
    <div class="app"><svg viewBox="0 0 78 78"><rect width="78" height="78" rx="18" fill="url(#g-set)"/><circle cx="39" cy="39" r="31" fill="#4c4d50"/><circle cx="39" cy="39" r="30" fill="none" stroke="#1c1c1e" stroke-width="5" stroke-dasharray="2.500 1.400"/><circle cx="39" cy="39" r="25" fill="none" stroke="#9c9da0" stroke-width="2"/><circle cx="39" cy="39" r="20" fill="#3a3b3e" stroke="#8f9093" stroke-width="4"/><path d="M39 39h20M39 39L29 21.500M39 39L29 56.500" stroke="#a3a4a6" stroke-width="3.500"/><circle cx="39" cy="39" r="5" fill="#2c2c2e" stroke="#a9aaac" stroke-width="2"/></svg><span class="badge">1</span></div>
    <div class="app"><svg viewBox="0 0 78 78"><circle cx="39" cy="39" r="40" fill="#65d46e"/><path d="M14 25c18-5 38-3 53 6M17 40c15-4 31-2 44 5M20 53c12-3 24-2 34 5" fill="none" stroke="#191414" stroke-linecap="round" stroke-width="7"/></svg></div>
    <div class="app on"><svg viewBox="0 0 78 78"><rect width="78" height="78" rx="18" fill="#fff"/><rect x="23" y="13" width="40" height="26" fill="#2354a4"/><rect x="39" y="20" width="12" height="13" fill="#4fb4ec"/><rect x="51" y="20" width="12" height="13" fill="#74d2fa"/><rect x="25" y="33" width="38" height="12" fill="#2c6bc8"/><path d="M20 40l22 14 22-14v24H20z" fill="#4597e2"/><path d="M35 45h22L42 54z" fill="#2458a8"/><path d="M64 64H20l22-13z" fill="#56a9ea"/><rect x="7" y="24" width="29" height="29" rx="3" fill="#2468c8"/><ellipse cx="21.500" cy="38.500" rx="6" ry="7" fill="none" stroke="#fff" stroke-width="3"/></svg></div>
    <div class="app on"><svg><use href="#i-excel"/></svg></div>
    <div class="app on"><svg viewBox="0 0 78 78"><rect width="78" height="78" rx="18" fill="url(#g-wa)"/><use href="#i-wa" x="9" y="4" width="60" height="69" color="#f4f5f4"/></svg></div>
    <div class="app"><svg viewBox="0 0 78 78"><rect width="78" height="78" rx="18" fill="#fff"/><rect x="20" y="13" width="44" height="13" fill="#5ea4e8"/><rect x="20" y="26" width="44" height="13" fill="#3d78d0"/><rect x="20" y="39" width="44" height="12" fill="#2a58b6"/><rect x="20" y="51" width="44" height="13" fill="#1f3f8a"/><rect x="7" y="24" width="29" height="29" rx="3" fill="#2253b6"/><text x="21.500" y="46" font-family="Inter" font-size="20" font-weight="600" fill="#fff" text-anchor="middle">W</text></svg></div>
    <div class="app"><svg viewBox="0 0 78 78"><path d="M4 5L58 1l5 8v50L6 66z" fill="#000" stroke="#fff" stroke-width="2.500"/><path d="M14 15L72 11l4 4v54l-5 4-54 4-3-4z" fill="#000" stroke="#fff" stroke-width="2.500"/><path d="M19 29l50-3v40l-50 4z" fill="#fff"/><text x="44" y="62" font-family="Liberation Serif" font-weight="700" font-size="40" text-anchor="middle" fill="#000">31</text></svg></div>
    <div class="app"><svg viewBox="0 0 78 78"><circle cx="39" cy="37" r="45" fill="#fff"/><circle cx="39" cy="37" r="39.500" fill="#964a86"/><circle cx="39" cy="37" r="24" fill="#fff"/></svg></div>
    <div class="app"><svg viewBox="0 0 78 78"><rect width="78" height="78" rx="18" fill="#c6c7c0"/><rect x="23" y="6" width="32" height="66" rx="5" fill="#111"/><rect x="25" y="8" width="28" height="62" rx="4" fill="url(#g-phone)"/><path d="M53 11C42 20 38 32 38 46l15-20z" fill="#8c7a8c"/><path d="M53 26C44 34 39 48 25 60v6a4 4 0 0 0 4 4h20a4 4 0 0 0 4-4z" fill="url(#g-phone2)"/><rect x="34" y="8" width="10" height="3" rx="1.500" fill="#111"/></svg></div>
    <div class="app"><svg viewBox="0 0 78 78"><rect width="78" height="78" rx="18" fill="#171b25"/><g fill="#ec6530"><rect x="21" y="14" width="20" height="17" rx="3"/><rect x="41" y="31" width="21" height="16" rx="3"/><rect x="21" y="47" width="20" height="16" rx="3"/></g></svg></div>
    <div class="app"><svg viewBox="0 0 78 78"><rect width="78" height="78" rx="18" fill="url(#g-gh)"/><path transform="translate(7 7) scale(4)" fill="#eceaf2" d="M8 0C3.580 0 0 3.580 0 8c0 3.540 2.290 6.530 5.470 7.590.4.070.55-.17.55-.38 0-.19-.01-.82-.01-1.490-2.010.37-2.530-.49-2.690-.94-.09-.23-.48-.94-.82-1.130-.28-.15-.68-.52-.01-.53.63-.01 1.080.58 1.230.82.72 1.210 1.870.87 2.330.66.070-.52.28-.87.51-1.070-1.780-.2-3.640-.89-3.640-3.950 0-.87.31-1.590.82-2.150-.08-.2-.36-1.020.08-2.120 0 0 .67-.21 2.200.82.64-.18 1.320-.27 2-.27s1.360.09 2 .27c1.530-1.040 2.200-.82 2.200-.82.44 1.100.16 1.920.08 2.120.51.56.82 1.270.82 2.150 0 3.070-1.870 3.750-3.650 3.950.29.25.54.73.54 1.480 0 1.070-.01 1.930-.01 2.200 0 .21.15.46.55.38A8.010 8.010 0 0 0 16 8c0-4.420-3.580-8-8-8z"/></svg></div>
    <div class="app"><svg viewBox="0 0 78 78"><rect width="78" height="78" rx="18" fill="#fff"/><path d="M11 48l5 5 36-27V12z" fill="#2b6fb8"/><path d="M11 31l5-5 36 27v13z" fill="#3279c6"/><path d="M51 12l14 7v40l-14 7z" fill="#4596e6"/></svg></div>
    <i class="dsep"></i>
    <div class="app on"><svg><use href="#i-acro"/></svg></div>
    <div class="app"><svg viewBox="0 0 78 78"><rect width="78" height="78" rx="18" fill="#fff"/><circle cx="41" cy="39" r="26" fill="#ea8f6c"/><path d="M41 39h26a26 26 0 0 1-50 10z" fill="#c2512f"/><path d="M41 13a26 26 0 0 0-26 26h26z" fill="#e77d58"/><rect x="9" y="24" width="30" height="29" rx="3" fill="#bd4523"/><text x="24" y="46" font-family="Inter" font-size="21" font-weight="600" fill="#fff" text-anchor="middle">P</text></svg></div>
    <div class="app on"><svg viewBox="0 0 78 78"><circle cx="39" cy="47" r="36" fill="#f7f7f6"/><path d="M22 29h16v16H22z" fill="#dd5534"/><path d="M40 29h17v16H40z" fill="#8ab83a"/><path d="M22 48h16v17H22z" fill="#4a9de0"/><path d="M40 48h17v17H40z" fill="#efb544"/><path d="M32-8h14v14h9L39 25 23 6h9z" fill="#69b85c"/></svg><span class="badge">5</span></div>
    <div class="app"><svg viewBox="0 0 78 78"><rect width="78" height="78" rx="18" fill="url(#g-red)"/><path d="M9 22l13-3v44l-5 2z" fill="#fff"/><path d="M25 16h42v38H31l-6 4z" fill="#fff"/><circle cx="46" cy="34" r="8" fill="#d6352b"/><path d="M33 54c0-14 26-14 26 0z" fill="#d6352b"/><circle cx="60" cy="60" r="21" fill="#3a3a3c"/><circle cx="60" cy="60" r="13" fill="#1f1f24"/><circle cx="60" cy="60" r="7" fill="#43476e"/><circle cx="58" cy="58" r="3" fill="#7a88b4"/></svg></div>
    <i class="dsep"></i>
    <div class="app"><svg viewBox="0 0 78 78"><path d="M10-3h38l21 26v58H8z" fill="#f3f3f2"/><path d="M12 3h34M12 8h36M12 13h36M12 18h38M12 23h40M12 28h54M12 33h54M12 38h54M12 43h54M12 48h54M12 53h54M12 58h54M12 63h54M12 68h54M12 73h54M12 78h54" stroke="#77787a" stroke-width="2.400" stroke-dasharray="3 1 2 1 4 1"/><path d="M48-3l21 26H48z" fill="#dadada"/><text x="39" y="75" font-family="Inter" font-size="14" fill="#555" stroke="#f3f3f2" stroke-width="2" paint-order="stroke" text-anchor="middle">XLSX</text></svg></div>
    <div class="app win"><svg viewBox="0 0 92 78"><rect y="11" width="91" height="54" fill="#fafafa"/><path d="M2 13h88M2 16h60" stroke="#ccc"/><path d="M80 14h9" stroke="#e0559a" stroke-width="2"/><path d="M3 20h12M3 25h10M3 30h12M3 35h10M3 40h12M3 45h10" stroke="#aaa"/><path d="M20 18v46" stroke="#4a86e8" stroke-width="1.500" stroke-dasharray="2 4"/><path d="M30 40h46" stroke="#333" stroke-width="2.500"/><path d="M36 43h10" stroke="#222" stroke-width="5"/><path d="M40 26h32M46 29h20M52 46h24" stroke="#aaa" stroke-dasharray="3 1"/><path d="M6 62h8" stroke="#3a7be0" stroke-width="3"/><use href="#i-acro" x="60" y="52" width="30" height="29"/></svg></div>
    <div class="app win"><svg viewBox="0 0 92 78"><rect y="11" width="91" height="54" fill="#fdfdfd"/><path d="M0 12.500h91" stroke="#ccc"/><use href="#i-mailapp" x="60" y="52" width="29" height="29"/></svg></div>
    <div class="app win"><svg viewBox="0 0 92 78"><rect y="11" width="91" height="54" fill="#fdfdfd"/><path d="M0 12.500h91" stroke="#ccc"/><use href="#i-mailapp" x="60" y="52" width="29" height="29"/></svg></div>
    <div class="app win"><svg viewBox="0 0 92 78"><rect y="12" width="91" height="52" fill="#f2f4f2"/><path d="M0 13h91" stroke="#3f8f5c" stroke-width="2"/><path d="M2 17h86" stroke="#bbb" stroke-dasharray="5 2"/><path d="M0 21.500h91" stroke="#f1e6bd" stroke-width="3"/><path d="M12 27h56M12 31h56M12 35h56M12 39h56" stroke="#a9adab" stroke-width="2" stroke-dasharray="8 4"/><use href="#i-excel" x="60" y="52" width="29" height="29"/></svg></div>
    <div class="app"><svg viewBox="0 0 78 78"><path d="M5 5l7 68c1 6 7 8 27 8s26-2 27-8l7-68z" fill="url(#g-trash)"/><ellipse cx="39" cy="5" rx="34" ry="8" fill="#c9cbc3" stroke="#eceded" stroke-width="2"/></svg></div>
  </div>
</div>
</body>
</html>
```

FILE: styles.css
```css
* { box-sizing: border-box; }
html, body { margin: 0; padding: 0; }
body { width: 3420px; height: 2214px; overflow: hidden; font-family: Inter, "Liberation Sans", sans-serif; color: #1f1f1f; }
svg { display: block; flex: none; overflow: visible; }
.defs { position: absolute; }
h1, h3, p, ul { margin: 0; padding: 0; font-weight: inherit; list-style: none; }

.desktop { position: relative; width: 3420px; height: 2214px; overflow: hidden; background: #6a85b8; }
.grass { position: absolute; left: 0; top: 1994px; }

/* macOS menu bar */
.menubar { position: relative; height: 78px; display: flex; justify-content: space-between; align-items: center; padding: 0 34px 4px 41px; background: linear-gradient(90deg, #4a689f, #5273a6 42%, #6480b4 80%, #6682b6); color: #fff; font-size: 26px; text-shadow: 0 3px 8px rgba(0,0,0,.3); }
.menus { display: grid; grid-template-columns: 67px 141px 132px 130px 198px 141px 149px 132px 141px 140px 80px; align-items: center; letter-spacing: -.4px; font-weight: 500; white-space: nowrap; }
.menus b { font-weight: 700; letter-spacing: -.1px; }
.status { display: flex; align-items: center; color: #f0f3f9; font-weight: 500; }
.status svg:nth-child(1) { margin-right: 35px; }
.status svg:nth-child(2) { margin-right: 34px; }
.status svg:nth-child(3) { margin-right: 36px; }
.status svg:nth-child(4) { margin-right: 36px; }
.status svg:nth-child(5) { margin-right: 37px; }
.battery-text { width: 55px; font-size: 22px; letter-spacing: -.5px; }
.status svg:nth-child(7) { margin-right: 35px; }
.status svg:nth-child(8) { margin-right: 38px; }
.status svg:nth-child(9) { margin-right: 39px; }
.status svg:nth-child(10) { margin-right: 36px; }
.clock { width: 204px; display: flex; justify-content: space-between; white-space: nowrap; letter-spacing: -.15px; }

/* window behind the browser */
.backwin { position: absolute; left: 0; top: 78px; width: 3420px; height: 1953px; border-radius: 20px; background: #cfcfcf; overflow: hidden; }
.backwin-top { height: 64px; background: #4d8d60; border-top: 2px solid #7fae94; }
.backwin-sheet { height: 1889px; width: 16px; background: linear-gradient(#bdbdbd 0 208px, #a9a9a9 208px 212px, #d3ccae 212px 270px, #b0ab96 270px 273px, #d3ccae 273px 332px, #aaa 332px 336px, #d2d2d2 336px 387px, #888 387px 392px, #cdcdcd 392px 442px, #999 442px 444px, #cbcbcb 444px 496px, #888 496px 498px, #cbcbcb 498px 1792px, #aaa 1792px 1794px, #cfcfcf 1794px 1844px, #999 1844px 1846px, #cfcfcf 1846px); }

/* browser */
.chrome { position: absolute; left: 16px; top: 92px; width: 3404px; height: 1976px; border-radius: 20px; overflow: hidden; background: #d3e8c2; display: flex; flex-direction: column; box-shadow: 0 0 3px 1px rgba(0,0,0,.4), 0 10px 30px rgba(0,0,0,.35); }
.tabstrip { height: 80px; display: flex; align-items: stretch; padding-left: 42px; border-top: 2px solid #e6f2dc; }
.lights { width: 142px; display: flex; gap: 16px; padding-top: 27px; }
.lights i { width: 24px; height: 24px; border-radius: 50%; background: #ed6a5e; border: 1px solid rgba(0,0,0,.12); }
.lights i:nth-child(2) { background: #f5bf4f; }
.lights i:nth-child(3) { background: #61c554; }
.tabs { display: flex; padding-top: 10px; }
.tab { position: relative; z-index: 0; width: 272px; height: 68px; display: flex; align-items: flex-start; padding: 12px 0 0 16px; font-size: 24px; }
.tab.short { width: 270px; }
.tab > svg:first-child { width: 32px; height: 32px; }
.tab span { width: 132px; height: 34px; margin-left: 17px; line-height: 32px; overflow: hidden; white-space: nowrap; letter-spacing: -.2px; -webkit-mask-image: linear-gradient(90deg, #000 62%, transparent); mask-image: linear-gradient(90deg, #000 62%, transparent); }
.tab .close { width: 16px; height: 16px; margin: 8px 0 0 23px; }
.tab.short .close { margin-left: 21px; }
.tab::after { content: ""; width: 4px; height: 32px; margin-left: 28px; border-radius: 2px; background: #fff; }
.tab.nosep::after { background: none; }
.tab .tabshape { position: absolute; left: -20px; top: 0; z-index: -1; }
.newtab { margin: 29px 0 0 18px; }
.tabsearch { width: 56px; height: 56px; margin: 10px 12px 0 auto; border-radius: 20px; background: #fff; display: flex; align-items: center; justify-content: center; }

.toolbar { height: 92px; background: #fff; border-radius: 18px 18px 0 0; display: flex; align-items: center; padding: 0 28px 0 31px; }
.navbtns { width: 209px; display: flex; align-items: center; gap: 47px; }
.omnibox { width: 2816px; height: 68px; border-radius: 34px; background: #e1e1e1; display: flex; align-items: center; padding: 0 32px 0 10px; }
.siteinfo { width: 48px; height: 48px; border-radius: 50%; background: #fff; display: flex; align-items: center; justify-content: center; }
.url { margin-left: 16px; font-size: 28px; letter-spacing: .23px; flex: 1; }
.url em { font-style: normal; color: #5f6368; }
.actions { flex: 1; display: flex; align-items: center; padding-left: 36px; }
.vsep { width: 4px; height: 32px; border-radius: 2px; background: #d3e8c2; flex: none; }
.actions .vsep { margin: 0 36px 0 34px; }
.actions svg:nth-child(4) { margin-left: 36px; }
.actions svg:nth-child(5) { margin-left: 48px; }

.bookmarks { height: 70px; background: #fff; border-bottom: 2px solid #c9c9c9; display: flex; align-items: flex-start; padding: 12px 62px 0 38px; }
.bookmarks .apps { margin-top: 2px; }
.bookmarks .vsep { margin: 0 28px 0 30px; }
.bmlist { flex: 1; display: grid; grid-template-columns: 108px 90px 112px 136px 156px 91px 117px 108px 120px 110px 128px 126px 156px 95px 141px 130px 124px 162px 112px 186px 198px 148px 170px; }
.bmlist a { display: flex; align-items: center; gap: 12px; height: 32px; line-height: 30px; font-size: 24px; letter-spacing: -.25px; white-space: nowrap; }
.bmlist svg { width: 32px; height: 32px; }
.more { margin-top: 8px; }

.viewport { flex: 1; display: flex; min-height: 0; }
.page { position: relative; width: 3388px; height: 1734px; overflow: hidden; background: #111629; color: #fff; display: flex; flex-direction: column; }
.scroll { width: 16px; background: #f0f0f0; padding-top: 1606px; }
.scroll i { display: block; height: 123px; border-radius: 8px; background: #8a8a8a; }

/* site header */
.site-header { height: 160px; flex: none; display: flex; align-items: center; padding: 0 190px 0 190px; background: #121729; box-shadow: 0 12px 24px rgba(8,16,20,.35); }
.brand { width: 731px; display: flex; align-items: center; gap: 24px; }
.logo { width: 112px; height: 112px; border-radius: 16px; background: #fff; box-shadow: 0 6px 10px rgba(0,0,0,.25); }
.brand-name { font-family: Poppins, Inter, sans-serif; font-weight: 700; font-size: 48px; line-height: 56px; letter-spacing: -1.2px; white-space: nowrap; margin-top: 4px; }
.brand-sub { font-size: 24px; line-height: 32px; letter-spacing: .2px; color: #e3e5e9; margin: 4px 0 0 1px; white-space: nowrap; }
.site-nav { width: 1997px; display: grid; grid-template-columns: 187px 247px 240px 242px 222px 217px 39px 240px; align-items: center; font-size: 32px; font-weight: 500; }
.site-nav a { display: flex; align-items: center; gap: 16px; letter-spacing: -.5px; white-space: nowrap; }
.site-nav svg { color: #d1d3d8; }
.bar { color: #4b5563; font-size: 28px; font-weight: 400; }
.site-nav .market { color: #fdf0c8; font-weight: 600; }
.lang { width: 280px; height: 80px; border-radius: 40px; background: #f3f4f6; border: 2px solid #fff; display: flex; align-items: center; padding-left: 6px; font-size: 28px; font-weight: 500; }
.lang > div { display: flex; align-items: center; gap: 9px; height: 64px; padding-left: 24px; letter-spacing: -.8px; }
.lang-on { width: 131px; border-radius: 32px; background: #121729; color: #fff; }
.lang-off { color: #6b7280; }

/* contact */
.contact { height: 1456px; display: flex; flex-direction: column; align-items: center; }
h1 { font-family: Poppins, Inter, sans-serif; font-weight: 700; font-size: 72px; line-height: 101px; height: 101px; margin-top: 1px; width: 482px; border-left: 2px solid #fff; white-space: nowrap; text-indent: -2px; }
.rule { width: 160px; height: 8px; margin-top: 22px; background: #f2ce47; }
.lead { margin-top: 50px; font-size: 32px; line-height: 48px; letter-spacing: -.85px; color: #f4f5f6; }
.cols { width: 3008px; margin-top: 94px; display: flex; justify-content: space-between; }
.places li { height: 168px; display: flex; gap: 33px; }
.places svg { margin-top: 15px; color: #f2ce47; }
.places h3 { font-size: 36px; font-weight: 500; line-height: 56px; letter-spacing: -.85px; }
.places p { font-size: 32px; line-height: 48px; margin-top: 1px; letter-spacing: -.62px; color: #d1d5db; }
.card { width: 1456px; height: 1004px; background: #fff; border-radius: 16px; padding: 48px; display: flex; flex-direction: column; gap: 32px; box-shadow: 0 20px 30px rgba(8,14,22,.4); }
.card input, .card textarea { display: block; width: 100%; height: 116px; border: 2px solid #e4e7eb; border-radius: 16px; padding: 1px 32px 0; font: 32px/48px Inter, sans-serif; letter-spacing: -.75px; background: #fff; outline: 0; }
.card textarea { height: 308px; padding-top: 34px; resize: none; overflow: hidden; }
.card ::placeholder { color: #9ca3af; opacity: 1; }
.area { position: relative; }
.grip { position: absolute; right: 3px; bottom: 3px; }
.card button { height: 112px; margin-top: 12px; border: 0; border-radius: 16px; background: #f2ce47; color: #111827; font: 600 32px Inter, sans-serif; letter-spacing: -.5px; display: flex; align-items: center; justify-content: center; gap: 16px; }

/* footer */
.site-footer { height: 118px; flex: none; border-top: 2px solid #202735; background: #121824; display: flex; justify-content: space-between; align-items: flex-start; padding: 48px 190px 0; }
.foot-brand { display: flex; gap: 24px; }
.foot-logo { width: 80px; height: 80px; border-radius: 12px; background: #fff; }
.foot-name { font-size: 32px; font-weight: 600; line-height: 48px; letter-spacing: -.1px; margin-top: 1px; }
.foot-sub { font-size: 24px; line-height: 32px; letter-spacing: -.1px; color: #6b7280; white-space: nowrap; }
.copy { font-size: 28px; line-height: 40px; margin-top: 21px; color: #9ca3af; letter-spacing: -.4px; white-space: nowrap; }
.copy span { margin: 0 16px; }
.copy a { color: #6aa3ee; }
.fab { position: absolute; right: 40px; border-radius: 42px; display: flex; align-items: center; justify-content: center; color: #fff; box-shadow: 0 8px 18px rgba(0,0,0,.3); }
.fab-wa { top: 1470px; width: 83px; height: 104px; background: #5fc468; }
.fab-up { top: 1598px; width: 72px; height: 96px; background: #f2ce47; }

/* dock */
.dock { position: absolute; left: 87px; top: 2078px; width: 3247px; height: 126px; border-radius: 38px; border: 2px solid rgba(190,198,160,.5); background: linear-gradient(90deg, #6f765a, #787e5e 45%, #858d5e); display: flex; padding-left: 2px; }
.app { position: relative; width: 104.74px; height: 122px; flex: none; display: flex; justify-content: center; padding-top: 17px; }
.app > svg { width: 78px; height: 78px; filter: drop-shadow(0 2px 2px rgba(0,0,0,.3)); }
.app.win > svg { width: 92px; }
.app.on::after { content: ""; position: absolute; left: 48px; bottom: 4px; width: 8px; height: 8px; border-radius: 50%; background: #0a0a0a; }
.dsep { width: 2px; height: 94px; margin: 14px 22px 0 23px; background: #565c40; flex: none; }
.badge { position: absolute; left: 65px; top: 7px; width: 38px; height: 38px; border-radius: 19px; background: #e04b3b; color: #fff; font-size: 22px; line-height: 38px; text-align: center; }
.badge.wide { left: 52px; width: 53px; letter-spacing: -1.2px; }
```
